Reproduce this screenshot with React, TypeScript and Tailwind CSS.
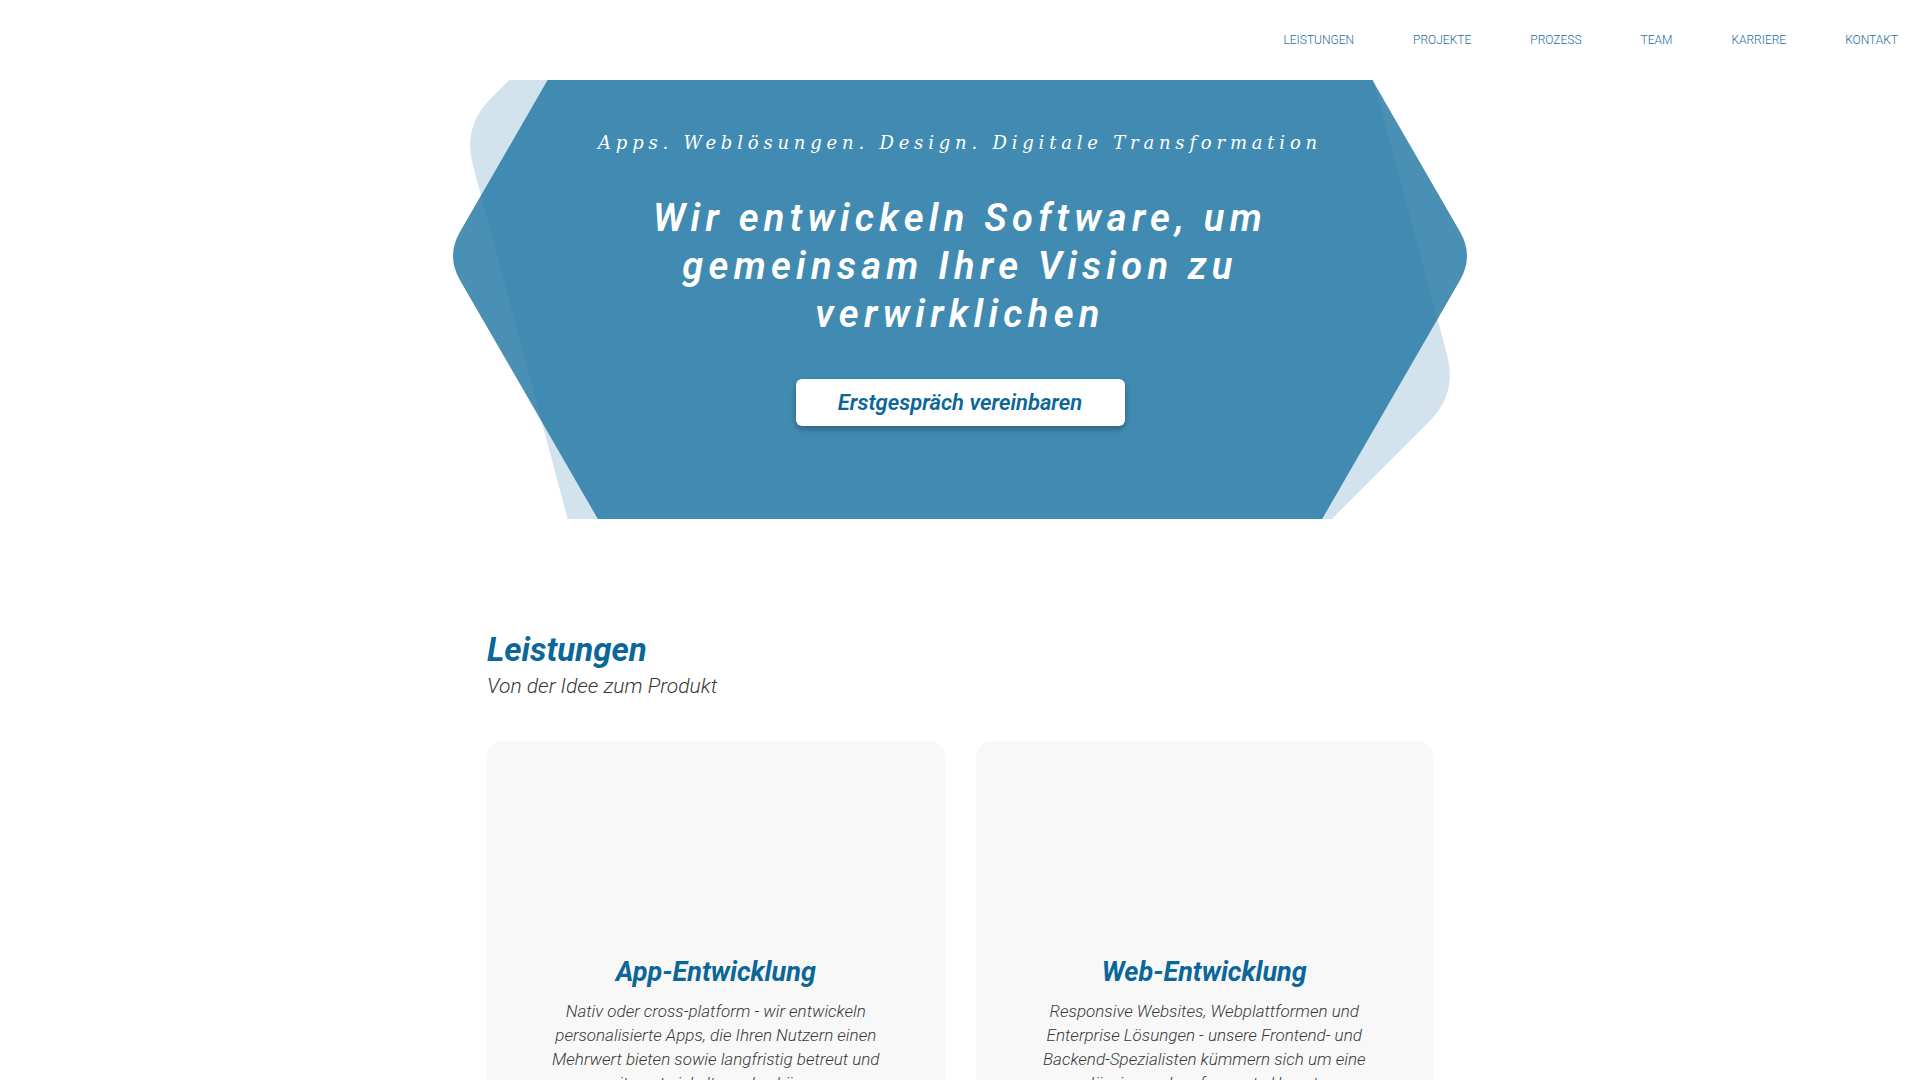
import type { ReactNode } from 'react'

type Pt = [number, number]

const navItems = ['Leistungen', 'Projekte', 'Prozess', 'Team', 'Karriere', 'Kontakt']

// hexagon with pointy left/right vertices, optionally rotated (deg, clockwise)
function hexPoints(cx: number, cy: number, r: number, rot: number): Pt[] {
  return [0, 1, 2, 3, 4, 5].map((k) => {
    const a = ((k * 60 + rot) * Math.PI) / 180
    return [cx + r * Math.cos(a), cy + r * Math.sin(a)] as Pt
  })
}

function toward(from: Pt, to: Pt, d: number): string {
  const dx = to[0] - from[0]
  const dy = to[1] - from[1]
  const len = Math.hypot(dx, dy)
  return `${(from[0] + (dx / len) * d).toFixed(1)},${(from[1] + (dy / len) * d).toFixed(1)}`
}

function roundedPath(pts: Pt[], d: number): string {
  let s = ''
  pts.forEach((p, i) => {
    const prev = pts[(i + pts.length - 1) % pts.length]
    const next = pts[(i + 1) % pts.length]
    s += `${i === 0 ? 'M' : 'L'}${toward(p, prev, d)} Q${p[0].toFixed(1)},${p[1].toFixed(1)} ${toward(p, next, d)} `
  })
  return s + 'Z'
}

const services = [
  {
    title: 'App-Entwicklung',
    lines: [
      'Nativ oder cross-platform - wir entwickeln',
      'personalisierte Apps, die Ihren Nutzern einen',
      'Mehrwert bieten sowie langfristig betreut und',
      'weiterentwickelt werden können.',
    ],
  },
  {
    title: 'Web-Entwicklung',
    lines: [
      'Responsive Websites, Webplattformen und',
      'Enterprise Lösungen - unsere Frontend- und',
      'Backend-Spezialisten kümmern sich um eine',
      'zuverlässige und performante Umsetzung.',
    ],
  },
]

function HeroShape() {
  const pale = roundedPath(hexPoints(960, 180, 515, 15), 40)
  const blue = roundedPath(hexPoints(960, 176, 514, 0), 28)
  return (
    <svg
      className="absolute left-1/2 top-0 h-[439px] w-[1920px] -translate-x-1/2"
      viewBox="0 0 1920 439"
      aria-hidden
    >
      <path d={pale} fill="#d3e3ed" />
      <path d={blue} fill="rgb(29,116,162)" fillOpacity={0.8} />
    </svg>
  )
}

function Card({ title, children }: { title: string; children: ReactNode }) {
  return (
    <div className="flex flex-col items-center rounded-2xl bg-[#f8f8f8] px-6 pt-[215px] pb-10">
      <h3 className="text-[27px] leading-[32px] font-bold italic text-[#0b6699]">{title}</h3>
      <div className="mt-[11px] text-center text-[17px] leading-[24px] font-light italic text-[#383838]">
        {children}
      </div>
    </div>
  )
}

export default function App() {
  return (
    <div className="min-h-screen bg-white font-['Roboto',sans-serif]">
      <header className="flex h-20 items-center justify-end gap-[59px] pr-[22px]">
        {navItems.map((item) => (
          <a key={item} href="#" className="text-[12px] font-light uppercase text-[#1f6d9f]">
            {item}
          </a>
        ))}
      </header>

      <section className="relative h-[439px] overflow-hidden">
        <HeroShape />
        <div className="relative flex flex-col items-center pt-[49px] text-white">
          <p className="font-['DejaVu_Serif',serif] text-[18px] leading-[28px] tracking-[4.8px] italic">
            Apps. Weblösungen. Design. Digitale Transformation
          </p>
          <h1 className="mt-[37px] text-center text-[38px] leading-[48px] font-semibold tracking-[5.3px] italic">
            Wir entwickeln Software, um
            <br />
            gemeinsam Ihre Vision zu
            <br />
            verwirklichen
          </h1>
          <a
            href="#"
            className="mt-[41px] flex h-[47px] w-[329px] items-center justify-center rounded-md bg-white text-[22px] font-semibold italic text-[#0b6699] shadow-[0_3px_6px_rgba(0,0,0,0.3)]"
          >
            Erstgespräch vereinbaren
          </a>
        </div>
      </section>

      <section className="mx-auto w-[946px] pt-[111px] pb-20">
        <h2 className="text-[33px] leading-[40px] font-bold italic text-[#0b6699]">Leistungen</h2>
        <p className="mt-[2px] text-[21px] leading-[28px] font-light italic text-[#383838]">
          Von der Idee zum Produkt
        </p>
        <div className="mt-[41px] grid grid-cols-2 gap-[31px]">
          {services.map((s) => (
            <Card key={s.title} title={s.title}>
              {s.lines.map((l) => (
                <span key={l} className="block">
                  {l}
                </span>
              ))}
            </Card>
          ))}
        </div>
      </section>
    </div>
  )
}
